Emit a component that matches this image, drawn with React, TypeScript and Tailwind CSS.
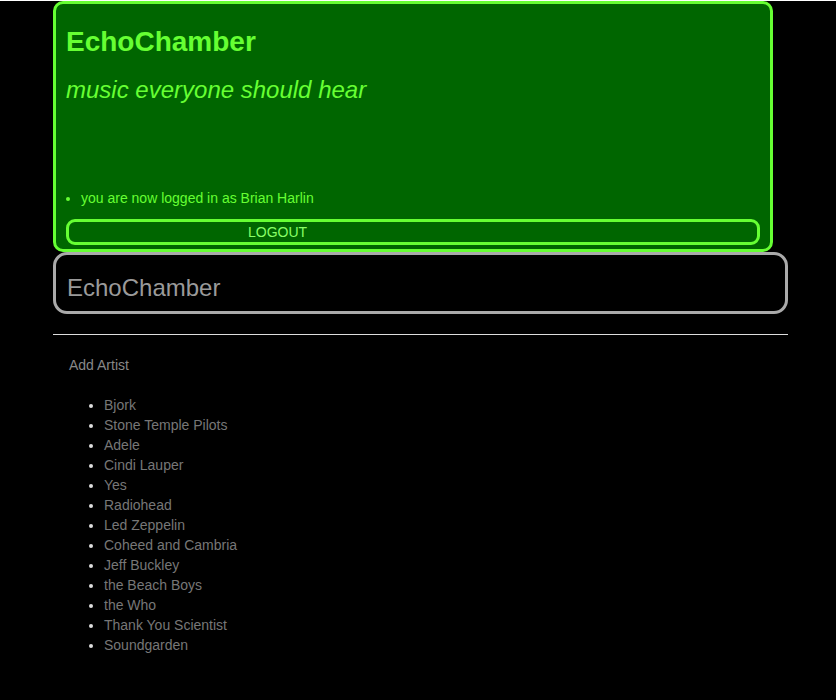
import React from "react";

const artists = [
  "Bjork",
  "Stone Temple Pilots",
  "Adele",
  "Cindi Lauper",
  "Yes",
  "Radiohead",
  "Led Zeppelin",
  "Coheed and Cambria",
  "Jeff Buckley",
  "the Beach Boys",
  "the Who",
  "Thank You Scientist",
  "Soundgarden",
];

const App: React.FC = () => {
  return (
    <div className="min-h-[700px] bg-black font-['Liberation_Sans',Arial,sans-serif]">
      <div className="ml-[53px] w-[735px]">
        {/* Header */}
        <div className="mt-[1px] w-[720px] h-[251px] rounded-[10px] border-[3px] border-[#66ff33] bg-[#006600] px-[10px] flex flex-col">
          <h1 className="mt-[20px] text-[28px] leading-[36px] font-bold text-[#66ff33]">EchoChamber</h1>
          <h2 className="mt-[15px] text-[24px] leading-[30px] italic text-[#66ff33]">music everyone should hear</h2>
          <ul className="mt-[84px] list-disc pl-[15px] text-[14px] leading-[18px] text-[#66ff33]">
            <li>you are now logged in as Brian Harlin</li>
          </ul>
          <button className="mt-[12px] w-[694px] h-[26px] rounded-[9px] border-[3px] border-[#66ff33] text-[14px] leading-[18px] text-[#88ff66] text-left pl-[179px]">
            LOGOUT
          </button>
        </div>

        {/* Nav */}
        <div className="h-[62px] rounded-[14px] border-[3px] border-[#aaaaaa] bg-black px-[11px] flex items-center">
          <span className="mt-[10px] text-[24px] leading-[30px] text-[#9a9a9a]">EchoChamber</span>
        </div>

        <div className="mt-[20px] h-px bg-[#dddddd]" />

        <div className="pl-[16px]">
          <p className="mt-[22px] text-[14px] leading-[16px] text-[#888888]">Add Artist</p>
          <ul className="mt-[22px] list-disc pl-[35px] text-[14px] leading-[20px] text-[#777777] marker:text-[#dddddd]">
            {artists.map((a) => (
              <li key={a}>{a}</li>
            ))}
          </ul>
        </div>
      </div>
    </div>
  );
};

export default App;
